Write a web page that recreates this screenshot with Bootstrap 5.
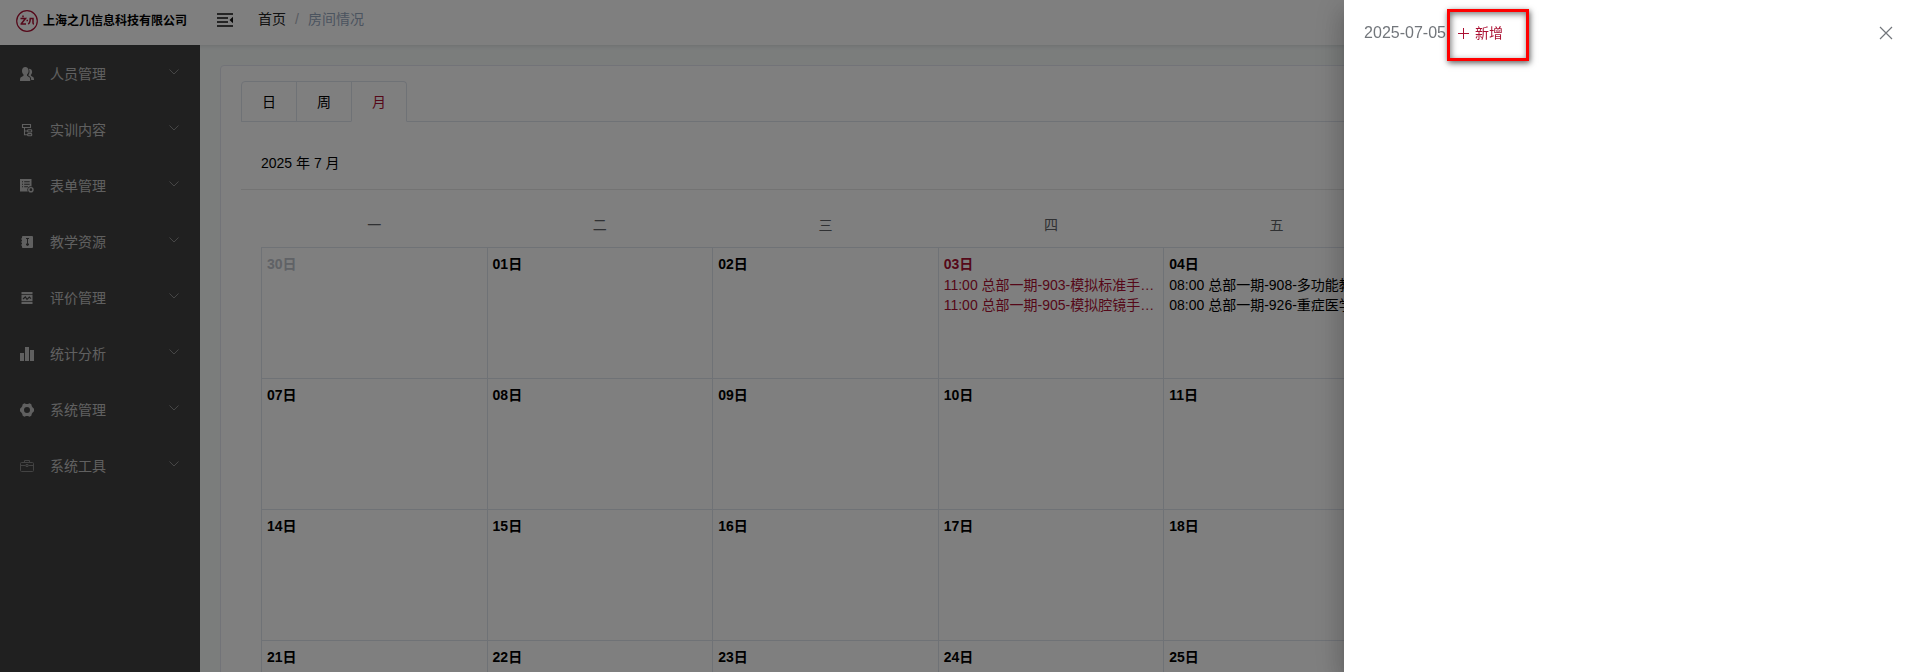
<!DOCTYPE html>
<html lang="zh-CN">
<head>
<meta charset="utf-8">
<meta name="viewport" content="width=device-width, initial-scale=1">
<title>房间情况</title>
<link rel="stylesheet" href="https://cdn.jsdelivr.net/npm/bootstrap@5.3.0/dist/css/bootstrap.min.css">
<style>
:root{--brand:#ab1032;--line:#e4e7ed}
body{font-family:"Liberation Sans","Noto Sans CJK SC",sans-serif;font-size:14px;line-height:20px;color:#000;background:#f6faf9;height:100vh;overflow:hidden}
.topbar{height:45px;background:#fff;box-shadow:0 1px 4px rgba(0,21,41,.12);z-index:2}
.logo-area{width:200px;padding-left:16px;gap:5px;font-size:12px;font-weight:700}
.fold-btn{margin-bottom:6px}
.breadcrumb{--bs-breadcrumb-item-padding-x:9px;--bs-breadcrumb-divider-color:#b0b6c2}
.breadcrumb a{color:#222}
.breadcrumb .active{color:#97a8be}
.sidebar{width:200px;background:#404040}
.side-link{height:56px;padding:2px 21px 0 20px;color:#c0c0c0;gap:16px;line-height:20px;border:0;background:none}
.side-link .chev{margin-bottom:4px;opacity:.6}
.content{padding:20px 31px 0 20px}
.panel{background:#fff;border:1px solid #e4e7f0;border-radius:4px 4px 0 0;padding:15px 20px 0}
.view-tabs{border-bottom:1px solid #dfe4ed}
.view-tabs button{width:56px;height:41px;margin:0 -1px -1px 0;padding:0;border:1px solid #dfe4ed;background:#fff;color:#000}
.view-tabs button:first-child{border-top-left-radius:4px}
.view-tabs button.active{color:var(--brand);border-bottom-color:#fff;border-top-right-radius:4px}
.month-head{margin-top:20px;padding:11px 20px 16px;border-bottom:1px solid #e6e6e6;height:48px}
.cal-wrap{padding:13px 20px 0}
.calendar{table-layout:fixed;border-collapse:collapse;width:100%}
.calendar th{padding:12px 0;height:44px;font-weight:400;color:#606266;text-align:center;line-height:20px}
.calendar td{border:1px solid #dfe4ed;height:131px;padding:6px 5px;vertical-align:top}
.calendar .today{color:var(--brand)}
.calendar .prev{color:#c0c4cc}
.calendar .fw-bold{line-height:21px}
.drawer{--bs-offcanvas-width:calc(30% - 5px);--bs-offcanvas-border-width:0;box-shadow:0 8px 10px -5px rgba(0,0,0,.2),0 16px 24px 2px rgba(0,0,0,.14),0 6px 30px 5px rgba(0,0,0,.12)}
.drawer-head{height:66px;padding:0 20px;color:#72767b}
.drawer-head h1{font-size:16px;font-weight:400;line-height:24px;margin:0}
.add-btn{color:var(--brand);border:0;background:none;padding:0;margin-left:12px;gap:6px;font-size:14px}
.add-wrap::after{content:"";position:absolute;inset:-14px -26px -18px 1px;border:3px solid #f00;box-shadow:1px 2px 6px rgba(0,0,0,.65),inset 1px 2px 6px rgba(0,0,0,.55);pointer-events:none}
.close-btn{border:0;background:none;padding:0;line-height:0}
</style>
</head>
<body class="d-flex flex-column">
<header class="topbar d-flex align-items-center flex-shrink-0 position-relative">
  <div class="logo-area d-flex align-items-center text-nowrap pb-2">
    <svg width="22" height="22" viewBox="0 0 22 22" fill="none" stroke="#ab1032" class="mt-1" aria-hidden="true"><circle cx="11" cy="11" r="10.3" stroke-width="1.2"/><path stroke-width="1.5" d="M7 5.5v1.800M4.500 8.500h5l-4 5M4.500 14h5.500M14.200 8.500c0 3-.5 4.700-2 5.500M13.500 8.500h3.500v4.600c0 .6.3.9 1 .9M10.500 10.500h1.500"/></svg>
    <span class="mt-1">上海之几信息科技有限公司</span>
  </div>
  <button class="btn p-0 border-0 ms-3 lh-1 fold-btn" type="button" aria-label="收起菜单">
    <svg width="18" height="16" viewBox="0 0 18 16" fill="none" stroke="#111" stroke-width="1.600"><path d="M1 2h16M1 6h11M1 10h11M1 14h16"/><path d="M17 4.800v6.400L13.500 8z" fill="#111" stroke="none"/></svg>
  </button>
  <nav aria-label="面包屑" class="ms-4 pb-2">
    <ol class="breadcrumb mb-0">
      <li class="breadcrumb-item"><a href="#" class="text-decoration-none">首页</a></li>
      <li class="breadcrumb-item active">房间情况</li>
    </ol>
  </nav>
</header>
<div class="d-flex flex-grow-1 overflow-hidden">
  <nav class="sidebar flex-shrink-0" id="side" aria-label="主菜单"></nav>
  <main class="content flex-grow-1 overflow-hidden">
    <section class="panel">
      <div class="view-tabs d-flex" role="tablist">
        <button type="button" role="tab">日</button>
        <button type="button" role="tab">周</button>
        <button type="button" role="tab" class="active" aria-selected="true">月</button>
      </div>
      <div class="month-head">2025 年 7 月</div>
      <div class="cal-wrap">
        <table class="calendar">
          <thead><tr><th>一</th><th>二</th><th>三</th><th>四</th><th>五</th><th>六</th><th>日</th></tr></thead>
          <tbody id="days"></tbody>
        </table>
      </div>
    </section>
  </main>
</div>
<div class="offcanvas-backdrop show"></div>
<aside class="offcanvas offcanvas-end show drawer" data-bs-backdrop="false" aria-labelledby="drawerDate">
  <div class="drawer-head d-flex align-items-center">
    <h1 id="drawerDate">2025-07-05</h1>
    <div class="add-wrap position-relative">
      <button type="button" class="add-btn d-flex align-items-center">
        <svg width="11" height="11" viewBox="0 0 11 11" stroke="currentColor" aria-hidden="true"><path d="M5.500 0v11M0 5.500h11"/></svg>新增
      </button>
    </div>
    <button type="button" class="close-btn ms-auto" aria-label="关闭"><svg width="14" height="14" viewBox="0 0 14 14" stroke="#72767b" stroke-width="1.200"><path d="M1 1l12 12M13 1L1 13"/></svg></button>
  </div>
</aside>
<script src="https://cdn.jsdelivr.net/npm/bootstrap@5.3.0/dist/js/bootstrap.bundle.min.js"></script>
<script>
const f='fill="currentColor"', s='fill="none" stroke="currentColor"';
const menu=[
 ['人员管理',`<g ${f}><path d="M5.300 0C3.400 0 2 1.500 2 3.700c0 1.600.6 3 1.500 3.800v1.200L.6 10.400C.2 10.800 0 12 0 14h10.300c0-2-.2-3.200-.6-3.600L7 8.700V7.500C8 6.700 8.600 5.300 8.600 3.700 8.600 1.500 7.200 0 5.300 0z"/><path d="M8.800 1.700c2 0 3.300 1.100 3.300 3 0 1.300-.5 2.400-1.200 3v1l2.500 1.500c.4.400.6 1.200.6 2.800h-2.800c0-2-.6-3.100-1.400-3.500L8.200 8.200c.8-.9 1.300-2.100 1.300-3.700 0-1.100-.2-2-.7-2.800z"/></g>`],
 ['实训内容',`<g ${s} stroke-width="1.100"><path d="M2.500 1.500h8v3h-8zM4.500 4.500v7.200h3.200M4.500 8h3.200"/><rect x="7.700" y="6.800" width="4" height="2.200" rx=".6"/><rect x="7.700" y="10.600" width="4" height="2.200" rx=".6"/></g>`],
 ['表单管理',`<path ${f} fill-rule="evenodd" d="M0 0h11.500v7.400a3.400 3.400 0 0 0-3.700 5.100H0zM2 2.300v1h1v-1zm2.200 0v1h5.500v-1zM2 4.800v1h1v-1zm2.200 0v1h5.500v-1zM2 7.300v1h1v-1zm2.200 0v1H8v-1z"/><circle cx="10.900" cy="10.700" r="2.100" ${s} stroke-width="1.400"/>`],
 ['教学资源',`<path ${f} fill-rule="evenodd" d="M3 1h9c.5 0 1 .5 1 1v10c0 .5-.5 1-1 1H3c-.5 0-1-.5-1-1v-1.500H1v-1h1V7.500H1v-1h1V4.500H1v-1h1V2c0-.5.5-1 1-1zm3 2v1h1v4l-1 1.200V10l1.500 1L9 10v-.8L8 8V4h1V3z"/>`],
 ['评价管理',`<path ${f} fill-rule="evenodd" d="M1.500 1h11v2h-11zM1.500 3.800h11v6.400h-11zM1.500 11h11v2h-11z"/><path d="M3 8l2.300-2L7 8.300 9.300 6 11 7.700" fill="none" stroke="#404040" stroke-width="1.200"/>`],
 ['统计分析',`<path ${f} d="M0 6h4v8H0zM5 0h4v14H5zM10 3h4v11h-4z"/>`],
 ['系统管理',`<path ${f} fill-rule="evenodd" d="M2.700 1.200 4.500.3 6 1h2l1.500-.7 1.800.9.500 2 .9 1.400 1.300 1.200v2.400l-1.300 1.200-.9 1.400-.5 2-1.800.9L8 13H6l-1.500.7-1.800-.9-.5-2-.9-1.400L0 8.200V5.800l1.300-1.200.9-1.400zM7 4a3 3 0 1 0 0 6 3 3 0 0 0 0-6z"/>`],
 ['系统工具',`<g ${s} opacity=".55"><rect x=".5" y="3.500" width="13" height="9" rx="1"/><path d="M4.500 3.500v-2h5v2M.5 6.500h5M8.500 6.500h5M6 5.500h2v2H6z"/></g>`]
];
document.getElementById('side').innerHTML=menu.map(([t,i])=>`<button type="button" class="side-link w-100 d-flex align-items-center"><svg width="14" height="14" viewBox="0 0 14 14" aria-hidden="true">${i}</svg><span>${t}</span><svg class="chev ms-auto" width="10" height="6" viewBox="0 0 10 6" ${s}><path d="M.5.5 5 5 9.500.5"/></svg></button>`).join('');
const events={
 3:['11:00 总部一期-903-模拟标准手…','11:00 总部一期-905-模拟腔镜手…'],
 4:['08:00 总部一期-908-多功能教室','08:00 总部一期-926-重症医学']
};
let rows='';
for(let w=0;w<4;w++){
  rows+='<tr>';
  for(let c=0;c<7;c++){
    const n=w*7+c, label=String(n||30).padStart(2,'0')+'日';
    rows+=`<td class="${n===0?'prev':n===3?'today':''}"><div class="fw-bold">${label}</div>${(events[n]||[]).map(e=>`<div class="text-truncate">${e}</div>`).join('')}</td>`;
  }
  rows+='</tr>';
}
document.getElementById('days').innerHTML=rows;
</script>
</body>
</html>
